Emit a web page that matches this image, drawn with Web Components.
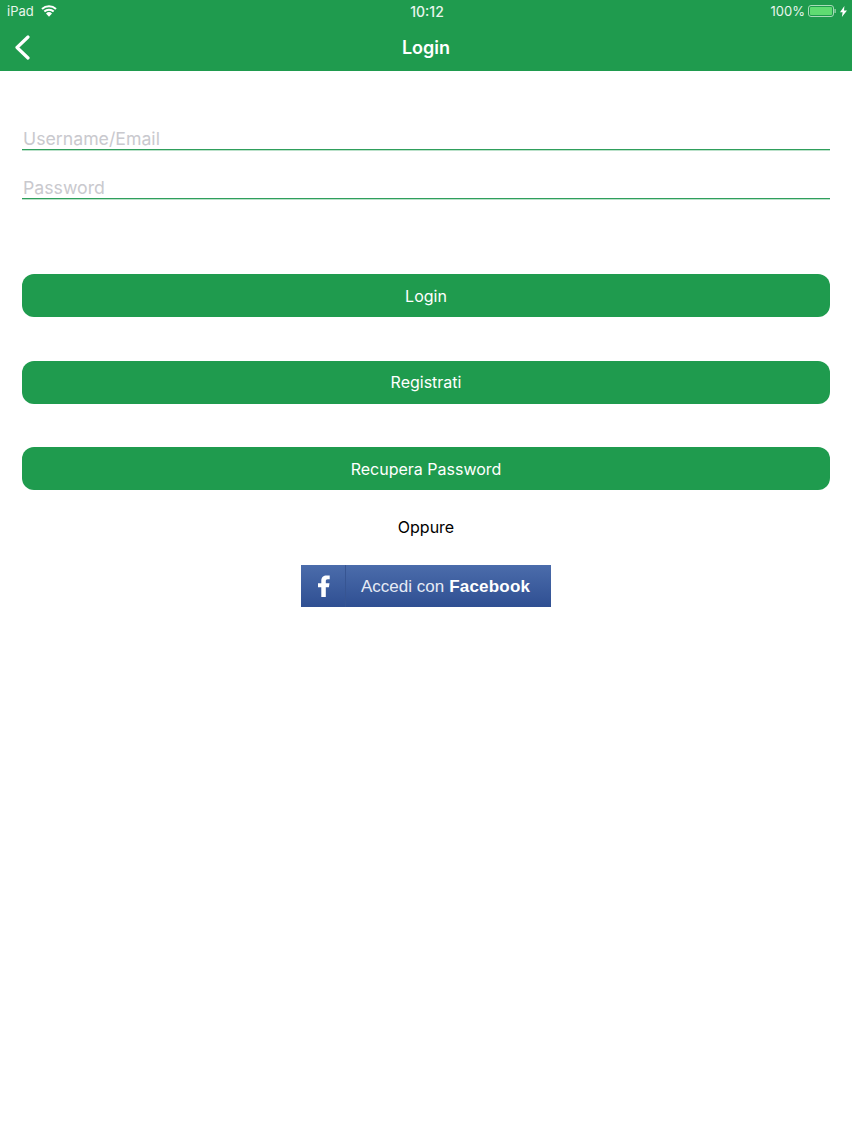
<!DOCTYPE html>
<html lang="it">
<head>
<meta charset="utf-8">
<title>Login</title>
<style>
  html, body { margin: 0; padding: 0; background: #fff; }
  body { width: 852px; height: 1136px; overflow: hidden; font-family: Inter, "Liberation Sans", sans-serif; }
</style>
</head>
<body>
<app-header title="Login"></app-header>
<login-form></login-form>

<script>
class StatusBar extends HTMLElement {
  constructor() {
    super();
    this.attachShadow({ mode: "open" });
  }

  connectedCallback() {
    this.shadowRoot.innerHTML = `
      <style>
        :host {
          display: grid;
          grid-template-columns: 1fr auto 1fr;
          align-items: center;
          height: 22px;
          padding: 0 5px 0 7px;
          color: #e8f5ec;
          font-size: 13px;
        }
        .left, .right { display: flex; align-items: center; }
        .left { gap: 7px; }
        .right { justify-content: flex-end; gap: 3px; }
        .time { font-size: 14px; font-weight: 500; }
        svg { display: block; }
      </style>
      <div class="left">
        <span>iPad</span>
        <svg width="16" height="12" viewBox="0 0 16 12">
          <path d="M8 11.800 5 8.500a4.400 4.400 0 0 1 6 0z" fill="#fff"/>
          <path d="M3.300 6.600a7 7 0 0 1 9.400 0M1 3.900a10.400 10.400 0 0 1 14 0" fill="none" stroke="#fff" stroke-width="2"/>
        </svg>
      </div>
      <span class="time">10:12</span>
      <div class="right">
        <span>100%</span>
        <svg width="28" height="12" viewBox="0 0 28 12">
          <rect x=".5" y=".5" width="25" height="11" rx="2.500" fill="none" stroke="#a8dcb8"/>
          <rect x="2" y="2" width="22" height="8" rx="1" fill="#5fdc72"/>
          <rect x="26.500" y="4" width="1.200" height="4" fill="#a8dcb8"/>
        </svg>
        <svg width="7" height="11" viewBox="0 0 7 11" style="margin-left:1px">
          <path d="M4.400 0 0 6.200h2.600L1.900 11 7 4.400H4z" fill="#fff"/>
        </svg>
      </div>
    `;
  }
}

class AppHeader extends HTMLElement {
  constructor() {
    super();
    this.attachShadow({ mode: "open" });
  }

  connectedCallback() {
    this.shadowRoot.innerHTML = `
      <style>
        :host { display: block; background: #1f9b4e; height: 71px; color: #fff; }
        .bar {
          display: grid;
          grid-template-columns: 1fr auto 1fr;
          align-items: center;
          height: 48px;
          padding: 1px 14px 0;
        }
        h1 { margin: 0; font-size: 18px; font-weight: 600; }
        svg { display: block; }
      </style>
      <status-bar></status-bar>
      <div class="bar">
        <svg width="16" height="25" viewBox="0 0 16 25">
          <path d="M14 2 3 12.500 14 23" fill="none" stroke="#fff" stroke-width="3.200" stroke-linecap="round" stroke-linejoin="round"/>
        </svg>
        <h1>${this.getAttribute("title")}</h1>
      </div>
    `;
  }
}

class TextField extends HTMLElement {
  constructor() {
    super();
    this.attachShadow({ mode: "open" });
  }

  connectedCallback() {
    this.shadowRoot.innerHTML = `
      <style>
        :host {
          display: block;
          height: 24px;
          border-bottom: 1px solid #2f9f5c;
          box-shadow: 0 1px 0 rgba(31, 155, 78, .3);
          color: #c9c9ce;
          font-size: 17.700px;
          line-height: 28px;
        }
        span { padding-left: 1px; }
      </style>
      <span><slot></slot></span>
    `;
  }
}

class GreenButton extends HTMLElement {
  constructor() {
    super();
    this.attachShadow({ mode: "open" });
  }

  connectedCallback() {
    this.shadowRoot.innerHTML = `
      <style>
        :host {
          display: flex;
          align-items: center;
          justify-content: center;
          height: 43px;
          border-radius: 12px;
          background: #1f9b4e;
          color: #fff;
          font-size: 16px;
        }
      </style>
      <slot></slot>
    `;
  }
}

class FacebookButton extends HTMLElement {
  constructor() {
    super();
    this.attachShadow({ mode: "open" });
  }

  connectedCallback() {
    this.shadowRoot.innerHTML = `
      <style>
        :host {
          display: flex;
          width: 250px;
          height: 42px;
          background: linear-gradient(#4b6cab, #2f4f92);
          color: #fff;
          font-family: "Liberation Sans", Arial, sans-serif;
          font-size: 17px;
        }
        .icon {
          display: flex;
          align-items: center;
          justify-content: center;
          width: 44px;
          border-right: 1px solid #375592;
        }
        .label { display: flex; align-items: center; gap: 5px; padding: 2px 0 0 15px; }
        span { color: #e6ebf5; }
        b { letter-spacing: .2px; }
        svg { display: block; }
      </style>
      <div class="icon">
        <svg width="13" height="22" viewBox="0 0 13 22">
          <path d="M8.800 22V12.200h3.100l.6-3.900H8.800V6.200c0-1.200.4-2 2-2h1.900V.6C12 .5 10.900.4 9.700.4 6.400.4 4.300 2.200 4.300 5.500v2.800H1v3.900h3.300V22z" fill="#fff"/>
        </svg>
      </div>
      <div class="label"><span>Accedi con</span><b>Facebook</b></div>
    `;
  }
}

class LoginForm extends HTMLElement {
  constructor() {
    super();
    this.attachShadow({ mode: "open" });
  }

  connectedCallback() {
    this.shadowRoot.innerHTML = `
      <style>
        :host { display: block; padding: 54px 22px 0; }
        .fields { display: grid; gap: 24px; margin-bottom: 75px; }
        .buttons { display: grid; gap: 43.500px; }
        .alt {
          display: flex;
          flex-direction: column;
          align-items: center;
          padding-top: 27.500px;
          gap: 28px;
          font-size: 16px;
          color: #000;
        }
        .alt span { line-height: 19px; }
      </style>
      <div class="fields">
        <text-field>Username/Email</text-field>
        <text-field>Password</text-field>
      </div>
      <div class="buttons">
        <green-button>Login</green-button>
        <green-button>Registrati</green-button>
        <green-button>Recupera Password</green-button>
      </div>
      <div class="alt">
        <span>Oppure</span>
        <facebook-button></facebook-button>
      </div>
    `;
  }
}

customElements.define("status-bar", StatusBar);
customElements.define("app-header", AppHeader);
customElements.define("text-field", TextField);
customElements.define("green-button", GreenButton);
customElements.define("facebook-button", FacebookButton);
customElements.define("login-form", LoginForm);
</script>
</body>
</html>
